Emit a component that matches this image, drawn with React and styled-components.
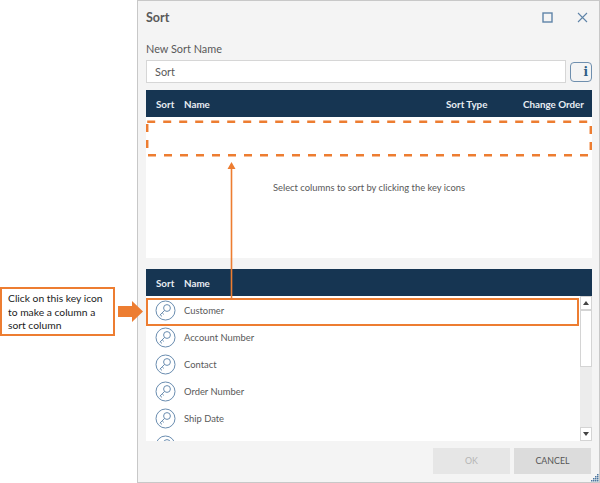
import React from 'react';
import styled, { createGlobalStyle } from 'styled-components';

const ORANGE = '#ed7d31';
const NAVY = '#163552';

const GlobalStyle = createGlobalStyle`
  html, body {
    margin: 0;
    padding: 0;
    background: #fff;
  }
  body {
    font-family: Lato, "Open Sans", sans-serif;
    font-size: 9.4px;
    color: #595959;
  }
`;

const columns = ['Customer', 'Account Number', 'Contact', 'Order Number', 'Ship Date', ''];

function KeyIcon() {
  return (
    <svg width="21" height="21" viewBox="0 0 21 21" fill="none" stroke="#6a8db0" strokeWidth="1">
      <circle cx="10.5" cy="10.5" r="9.5" />
      <circle cx="12" cy="8" r="3.4" />
      <path d="M9.6 10.4 L4.8 15.2 M5.2 14.8 L7 16.4 M7.2 12.8 L8.8 14.4" />
    </svg>
  );
}

export default function App() {
  return (
    <>
      <GlobalStyle />
      <Page>
        <Side>
          <Callout>Click on this key icon<br />to make a column a<br />sort column</Callout>
          <svg width="25" height="21" viewBox="0 0 25 21">
            <path d="M0 5 H14 V0 L25 10.5 L14 21 V16 H0 Z" fill={ORANGE} />
          </svg>
        </Side>
        <Dialog>
          <TitleBar>
            <Title>Sort</Title>
            <WindowButtons>
              <svg width="11" height="11" viewBox="0 0 11 11" fill="none" stroke="#5f84a8" strokeWidth="1.4">
                <rect x="1" y="1" width="9" height="9" />
              </svg>
              <svg width="11" height="11" viewBox="0 0 11 11" fill="none" stroke="#5f84a8" strokeWidth="1.1">
                <path d="M1 1 L10 10 M10 1 L1 10" />
              </svg>
            </WindowButtons>
          </TitleBar>
          <Label>New Sort Name</Label>
          <NameRow>
            <NameInput>Sort</NameInput>
            <InfoButton>i</InfoButton>
          </NameRow>
          <HeaderBar>
            <SortHead>Sort</SortHead>
            <NameHead>Name</NameHead>
            <TypeHead>Sort Type</TypeHead>
            <OrderHead>Change Order</OrderHead>
          </HeaderBar>
          <SortPanel>
            <DropZone width="446" height="38" viewBox="0 0 446 38" fill="none">
              <rect x="1.2" y="1.7" width="443.6" height="33.6" stroke={ORANGE} strokeWidth="2.5" strokeDasharray="8 8" />
            </DropZone>
            <Hint>Select columns to sort by clicking the key icons</Hint>
          </SortPanel>
          <ListHeader>
            <SortHead>Sort</SortHead>
            <NameHead>Name</NameHead>
          </ListHeader>
          <ListBody>
            <Rows>
              {columns.map((name, i) => (
                <Row key={i}>
                  <KeyIcon />
                  {name && <span>{name}</span>}
                </Row>
              ))}
            </Rows>
            <Scrollbar>
              <ScrollButton>
                <svg width="6" height="4" viewBox="0 0 6 4"><path d="M3 0 L6 4 H0 Z" fill="#444" /></svg>
              </ScrollButton>
              <Thumb />
              <Track />
              <ScrollButton>
                <svg width="6" height="4" viewBox="0 0 6 4"><path d="M0 0 H6 L3 4 Z" fill="#444" /></svg>
              </ScrollButton>
            </Scrollbar>
            <Highlight />
          </ListBody>
          <Footer>
            <ActionButton disabled>OK</ActionButton>
            <ActionButton>CANCEL</ActionButton>
          </Footer>
          <Grip width="9" height="9" viewBox="0 0 9 9" fill="#4a76a0">
            <rect x="7" y="1" width="1.5" height="1.5" />
            <rect x="5" y="3" width="1.5" height="1.5" />
            <rect x="7" y="3" width="1.5" height="1.5" />
            <rect x="3" y="5" width="1.5" height="1.5" />
            <rect x="5" y="5" width="1.5" height="1.5" />
            <rect x="7" y="5" width="1.5" height="1.5" />
            <rect x="1" y="7" width="1.5" height="1.5" />
            <rect x="3" y="7" width="1.5" height="1.5" />
            <rect x="5" y="7" width="1.5" height="1.5" />
            <rect x="7" y="7" width="1.5" height="1.5" />
          </Grip>
          <Pointer width="9" height="136" viewBox="0 0 9 136">
            <path d="M4.5 0 L8.5 7 H5.3 V136 H3.7 V7 H0.5 Z" fill={ORANGE} />
          </Pointer>
        </Dialog>
      </Page>
    </>
  );
}

const Page = styled.div`
  display: flex;
  width: 600px;
  height: 483px;
  overflow: hidden;
`;
const Side = styled.div`
  position: relative;
  z-index: 1;
  width: 137px;
  flex: none;
  display: flex;
  align-items: center;
  gap: 3px;
  padding-top: 140px;
  height: 343px;
  align-self: flex-start;
  svg { flex: none; }
`;
const Callout = styled.div`
  width: 115px;
  height: 49px;
  flex: none;
  box-sizing: border-box;
  padding: 3px 6px;
  border: 2px solid ${ORANGE};
  background: #fff;
  color: #222;
  font-size: 10.3px;
  line-height: 13.5px;
  white-space: nowrap;
`;
const Dialog = styled.div`
  position: relative;
  width: 463px;
  height: 483px;
  flex: none;
  box-sizing: border-box;
  padding: 0 7px 0 8px;
  background: #f4f4f4;
  border: 1px solid #c8c8c8;
  display: flex;
  flex-direction: column;
`;
const TitleBar = styled.div`
  display: flex;
  justify-content: space-between;
  align-items: center;
  height: 33px;
`;
const Title = styled.div`
  font-size: 12.5px;
  font-weight: 700;
  color: #595959;
`;
const WindowButtons = styled.div`
  display: flex;
  gap: 24px;
  margin-right: 4px;
`;
const Label = styled.div`
  margin-top: 8px;
  height: 18px;
  line-height: 14px;
  font-size: 10.9px;
`;
const NameRow = styled.div`
  display: flex;
  align-items: center;
  gap: 4px;
  height: 23px;
`;
const NameInput = styled.div`
  width: 420px;
  height: 23px;
  box-sizing: border-box;
  padding: 0 8px;
  line-height: 21px;
  font-size: 10.9px;
  background: #fff;
  border: 1px solid #d6d6d6;
`;
const InfoButton = styled.div`
  width: 22px;
  height: 20px;
  box-sizing: border-box;
  padding-right: 3px;
  text-align: right;
  font-family: "DejaVu Serif", serif;
  font-weight: 700;
  font-size: 12px;
  line-height: 18px;
  color: #2f5d86;
  border: 1px solid #6f8fae;
  border-radius: 4px;
`;
const HeaderBar = styled.div`
  display: flex;
  align-items: center;
  height: 27px;
  margin-top: 7px;
  background: ${NAVY};
  color: #e8edf2;
  font-weight: 700;
  font-size: 9.8px;
  flex: none;
`;
const ListHeader = styled(HeaderBar)`
  margin-top: 11px;
`;
const SortHead = styled.div`
  width: 38px;
  padding-left: 10px;
  box-sizing: border-box;
`;
const NameHead = styled.div`
  flex: 1;
`;
const TypeHead = styled.div`
  width: 77px;
`;
const OrderHead = styled.div`
  width: 69px;
`;
const SortPanel = styled.div`
  position: relative;
  height: 141px;
  background: #fff;
  display: flex;
  justify-content: center;
  padding-top: 64px;
  box-sizing: border-box;
  flex: none;
`;
const DropZone = styled.svg`
  position: absolute;
  left: 0;
  top: 3px;
`;
const Hint = styled.div`
  line-height: 14px;
`;
const ListBody = styled.div`
  position: relative;
  height: 145px;
  display: flex;
  background: #fff;
  overflow: hidden;
  flex: none;
`;
const Rows = styled.div`
  flex: 1;
`;
const Row = styled.div`
  display: flex;
  align-items: center;
  gap: 8px;
  height: 27px;
  padding-left: 9px;
  position: relative;
  top: 1px;
`;
const Scrollbar = styled.div`
  width: 12px;
  flex: none;
  display: flex;
  flex-direction: column;
  background: #ececec;
`;
const ScrollButton = styled.div`
  height: 14px;
  flex: none;
  box-sizing: border-box;
  display: flex;
  align-items: center;
  justify-content: center;
  background: #fff;
  border: 1px solid #d4d4d4;
`;
const Thumb = styled.div`
  height: 57px;
  flex: none;
  background: #fff;
  border: 1px solid #d4d4d4;
  box-sizing: border-box;
`;
const Track = styled.div`
  flex: 1;
`;
const Highlight = styled.div`
  position: absolute;
  left: 0;
  top: 2px;
  width: 433px;
  height: 28px;
  box-sizing: border-box;
  border: 2.5px solid ${ORANGE};
`;
const Footer = styled.div`
  display: flex;
  justify-content: flex-end;
  gap: 4px;
  margin-top: 7px;
  padding-right: 1px;
`;
const ActionButton = styled.div`
  width: 77px;
  height: 26px;
  line-height: 26px;
  text-align: center;
  font-size: 8.8px;
  background: ${({ disabled }) => (disabled ? '#e6e6e6' : '#dcdcdc')};
  color: ${({ disabled }) => (disabled ? '#b5b5b5' : '#555')};
`;
const Grip = styled.svg`
  position: absolute;
  right: 0;
  bottom: 0;
`;
const Pointer = styled.svg`
  position: absolute;
  left: 89px;
  top: 161px;
`;
